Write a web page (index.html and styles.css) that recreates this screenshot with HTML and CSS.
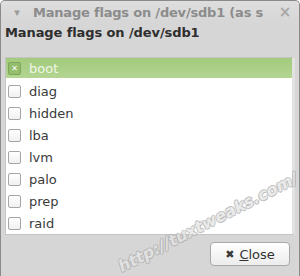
FILE: index.html
```html
<!DOCTYPE html>
<html lang="en">
  <head>
    <meta charset="UTF-8" />
    <title>Manage flags on /dev/sdb1</title>
    <link rel="stylesheet" href="styles.css">
  </head>
  <body>
    <div class="window">
      <div class="titlebar">
        <span class="menu-arrow">▾</span>
        <span class="title">Manage flags on /dev/sdb1 (as s</span>
        <span class="close-x">×</span>
      </div>
      <div class="content">
        <h2>Manage flags on /dev/sdb1</h2>
        <ul class="flags">
          <li class="selected"><span class="box checked">✕</span>boot</li>
          <li><span class="box"></span>diag</li>
          <li><span class="box"></span>hidden</li>
          <li><span class="box"></span>lba</li>
          <li><span class="box"></span>lvm</li>
          <li><span class="box"></span>palo</li>
          <li><span class="box"></span>prep</li>
          <li><span class="box"></span>raid</li>
        </ul>
        <div class="actions">
          <button type="button"><span class="btn-icon">✖</span><u>C</u>lose</button>
        </div>
      </div>
      <div class="watermark">http://tuxtweaks.com/</div>
    </div>
  </body>
</html>
```

FILE: styles.css
```css
body {
  margin: 0;
  width: 300px;
  height: 276px;
  overflow: hidden;
  background: #ffffff;
  font-family: "DejaVu Sans", sans-serif;
}
.window {
  position: relative;
  height: 276px;
  background: #d6d6d6;
  border: 1px solid #8a8a8a;
  border-bottom: none;
  border-radius: 5px 5px 0 0;
  overflow: hidden;
  box-sizing: border-box;
}
.titlebar {
  height: 22px;
  display: flex;
  align-items: center;
  background: linear-gradient(#dedede, #d6d6d6);
  color: #8c8c8c;
  font-weight: bold;
  font-size: 13px;
}
.menu-arrow {
  width: 32px;
  text-align: center;
  font-size: 11px;
  color: #9a9a9a;
}
.title {
  flex: 1;
  white-space: nowrap;
  overflow: hidden;
  letter-spacing: -0.2px;
}
.close-x {
  width: 28px;
  text-align: center;
  font-size: 15px;
  color: #a8a8a8;
}
.content {
  padding: 0 4px;
}
h2 {
  margin: 2px 0 0 0;
  font-size: 13px;
  font-weight: bold;
  color: #2e2e2e;
  height: 32px;
  letter-spacing: -0.1px;
}
.flags {
  list-style: none;
  margin: 0;
  padding: 0 0 2px 0;
  background: #ffffff;
  border: 1px solid #c4c4c4;
  border-right: 3px solid #e2e2e2;
  height: 178px;
  box-sizing: border-box;
}
.flags li {
  height: 22px;
  display: flex;
  align-items: center;
  font-size: 13px;
  color: #3a3a3a;
}
.flags li.selected {
  height: 20px;
  margin-bottom: 2px;
  background: linear-gradient(#a3ca7d, #b3d592);
  color: #eef7e4;
}
.box {
  width: 11px;
  height: 11px;
  margin: 0 8px 0 2px;
  border: 1px solid #a6a6a6;
  border-radius: 2px;
  background: linear-gradient(#ffffff, #f0f0f0);
  display: flex;
  align-items: center;
  justify-content: center;
  font-size: 8px;
  font-weight: bold;
}
.box.checked {
  border-color: #7ea65a;
  background: #94bd6c;
  color: #ffffff;
}
.actions {
  display: flex;
  justify-content: flex-end;
  padding: 7px 5px 0 0;
}
button {
  width: 80px;
  height: 24px;
  border: 1px solid #a9a9a9;
  border-radius: 4px;
  background: linear-gradient(#ffffff, #ececec);
  font-family: "DejaVu Sans", sans-serif;
  font-size: 13px;
  color: #333333;
  display: flex;
  align-items: center;
  justify-content: center;
  padding: 0;
}
.btn-icon {
  font-size: 11px;
  margin-right: 5px;
  color: #3a3a3a;
}
.watermark {
  position: absolute;
  left: 114px;
  top: 258px;
  transform: rotate(-27deg);
  transform-origin: left top;
  font-family: "DejaVu Sans", sans-serif;
  font-style: italic;
  font-weight: bold;
  font-size: 16px;
  color: #e4e4e4;
  text-shadow: 1px 0 0 #a8a8a8, -1px 0 0 #a8a8a8, 0 1px 0 #a8a8a8, 0 -1px 0 #a8a8a8;
  white-space: nowrap;
  opacity: 0.75;
}
```
